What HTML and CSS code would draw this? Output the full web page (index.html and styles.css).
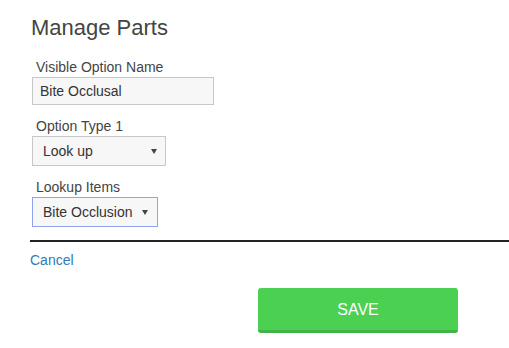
FILE: index.html
```html
<!DOCTYPE html>
<html>
<head>
    <title>Manage Parts</title>
    <meta charset="UTF-8">
    <link rel="stylesheet" href="styles.css">
</head>
<body>
    <div class="container">
        <h1>Manage Parts</h1>

        <div class="field">
            <label>Visible Option Name</label>
            <input type="text" class="text-input" value="Bite Occlusal">
        </div>

        <div class="field">
            <label>Option Type 1</label>
            <div class="select-wrap type-select">
                <select><option>Look up</option></select>
            </div>
        </div>

        <div class="field">
            <label>Lookup Items</label>
            <div class="select-wrap lookup-select focused">
                <select><option>Bite Occlusion</option></select>
            </div>
        </div>

        <hr class="divider">

        <a href="#" class="cancel">Cancel</a>

        <div class="actions">
            <button class="save">SAVE</button>
        </div>
    </div>
</body>
</html>
```

FILE: styles.css
```css
body {
    font-family: "Liberation Sans", Arial, sans-serif;
    margin: 0;
    background-color: white;
    color: #333;
}
.container {
    padding: 15px 0 0 30px;
}
h1 {
    font-size: 22px;
    font-weight: normal;
    line-height: 26px;
    color: #444;
    margin: 0 0 18px 1px;
}
.field {
    margin-bottom: 13px;
    padding-left: 2px;
}
.field label {
    display: block;
    font-size: 14px;
    line-height: 16px;
    color: #444;
    margin: 0 0 2px 4px;
}
.text-input {
    display: block;
    box-sizing: border-box;
    width: 182px;
    height: 28px;
    padding: 0 7px;
    border: 1px solid #c8c8c8;
    background-color: #f7f7f7;
    font-family: inherit;
    font-size: 14px;
    color: #333;
    outline: none;
}
.select-wrap {
    position: relative;
    height: 30px;
}
.select-wrap select {
    -webkit-appearance: none;
    appearance: none;
    box-sizing: border-box;
    width: 100%;
    height: 30px;
    padding: 0 10px;
    border: 1px solid #c8c8c8;
    border-radius: 0;
    background-color: #f7f7f7;
    font-family: inherit;
    font-size: 14px;
    color: #333;
    outline: none;
}
.select-wrap::after {
    content: "";
    position: absolute;
    top: 13px;
    right: 9px;
    border-left: 3px solid transparent;
    border-right: 3px solid transparent;
    border-top: 5px solid #444;
    pointer-events: none;
}
.type-select { width: 134px; }
.lookup-select { width: 126px; }
.lookup-select::after { right: 10px; }
.focused select {
    border-color: #8fa3ee;
}
.divider {
    border: none;
    height: 2px;
    background-color: #222;
    margin: 0 0 10px 0;
}
.cancel {
    display: block;
    font-size: 14px;
    line-height: 16px;
    color: #337ab7;
    text-decoration: none;
    width: max-content;
}
.actions {
    margin: 20px 0 0 228px;
}
.save {
    width: 200px;
    height: 45px;
    border: none;
    border-bottom: 3px solid #3fb547;
    border-radius: 3px;
    background-color: #4bd052;
    color: white;
    font-family: inherit;
    font-size: 16px;
    padding: 2px 0 0 0;
    cursor: pointer;
}
```
